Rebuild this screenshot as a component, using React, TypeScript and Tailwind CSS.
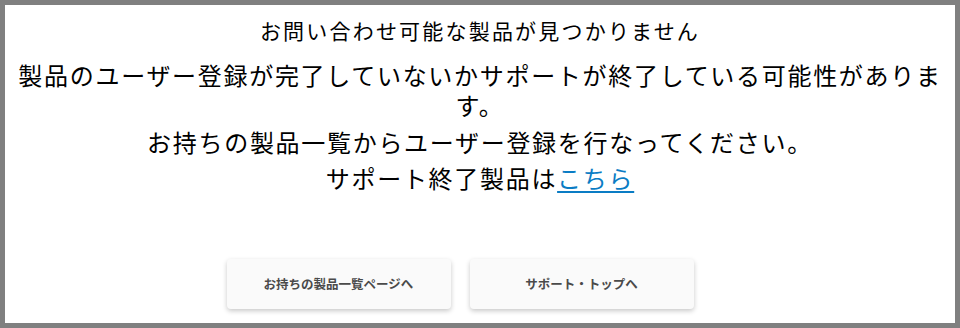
export default function App() {
  const jp = { fontFamily: '"Noto Sans CJK JP", "Noto Sans", sans-serif' }

  return (
    <div className="h-[328px] w-[960px] bg-[#808080] p-[5px]" style={jp}>
      <div className="flex h-full flex-col items-center bg-white px-[12px] pt-[10px] text-center text-black">
        {/* heading */}
        <h1 className="text-[21px] leading-[30px] tracking-[2.2px]">
          お問い合わせ可能な製品が見つかりません
        </h1>

        {/* message */}
        <p className="mt-[15px] text-[24px] leading-[30px] tracking-[1.7px]">
          製品のユーザー登録が完了していないかサポートが終了している可能性があります。
        </p>
        <p className="mt-[4px] text-[24px] leading-[36px] tracking-[1.7px]">
          お持ちの製品一覧からユーザー登録を行なってください。
          <br />
          サポート終了製品は
          <a href="#" className="text-[#0a7cc4] underline underline-offset-[3px]">
            こちら
          </a>
        </p>

        {/* actions */}
        <div className="mt-auto mb-[14px] flex gap-[19px] pr-[40px]">
          <button className="h-[50px] w-[224px] rounded-[4px] bg-[#fafafa] text-[12.5px] font-bold text-[#4a4a4a] shadow-[0_2px_5px_rgba(0,0,0,0.22)]">
            お持ちの製品一覧ページへ
          </button>
          <button className="h-[50px] w-[224px] rounded-[4px] bg-[#fafafa] text-[12.5px] font-bold text-[#4a4a4a] shadow-[0_2px_5px_rgba(0,0,0,0.22)]">
            サポート・トップへ
          </button>
        </div>
      </div>
    </div>
  )
}
